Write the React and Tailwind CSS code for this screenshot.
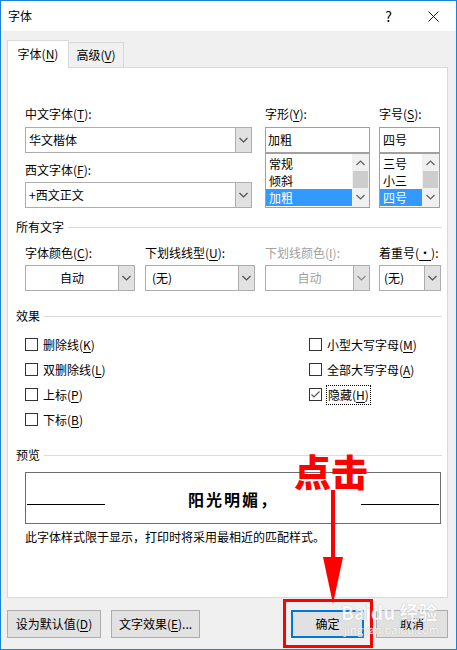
import React from "react";

// small chevron used in combo boxes and scrollbars
const Chevron = ({ up = false, color = "#606060" }) => (
  <svg width="9" height="6" viewBox="0 0 9 6">
    <polyline
      points={up ? "0.5,5 4.5,1 8.5,5" : "0.5,1 4.5,5 8.5,1"}
      fill="none"
      stroke={color}
      strokeWidth="1.2"
    />
  </svg>
);

// label text with an underlined access key
const Key = ({ children }) => <span className="underline underline-offset-2">{children}</span>;

function Combo({ className, text, center = false, disabled = false }) {
  return (
    <div className={`flex h-[26px] border border-[#adadad] bg-white ${className || ""}`}>
      <div
        className={`flex flex-1 items-center px-[3px] ${center ? "justify-center" : ""} ${
          disabled ? "text-[#a0a0a0]" : "text-black"
        }`}
      >
        {text}
      </div>
      <div className="flex w-[16px] items-center justify-center border-l border-[#adadad] bg-[#e1e1e1]">
        <Chevron color={disabled ? "#8a8a8a" : "#505050"} />
      </div>
    </div>
  );
}

function ListBox({ items }) {
  return (
    <div className="flex h-[55px] border border-[#a0a0a0] bg-white">
      <div className="flex-1 pt-[1px]">
        {items.map((item, i) => (
          <div
            key={item}
            className={`flex h-[17px] items-center pl-[3px] ${
              i === items.length - 1 ? "bg-[#3399ff] text-white" : "text-black"
            }`}
          >
            {item}
          </div>
        ))}
      </div>
      <div className="flex w-[17px] flex-col bg-[#f0f0f0]">
        <div className="flex h-[17px] items-center justify-center">
          <Chevron up color="#606060" />
        </div>
        <div className="mx-[1px] h-[17px] bg-[#cdcdcd]" />
        <div className="flex h-[17px] items-center justify-center">
          <Chevron color="#606060" />
        </div>
      </div>
    </div>
  );
}

function Check({ label, checked = false, focus = false }) {
  return (
    <div className="flex h-[25px] items-center">
      <div className="flex h-[13px] w-[13px] items-center justify-center border border-[#333333] bg-white">
        {checked && (
          <svg width="11" height="11" viewBox="0 0 11 11">
            <polyline points="1.5,5.5 4,8 9.5,2.5" fill="none" stroke="#555555" strokeWidth="1.2" />
          </svg>
        )}
      </div>
      <div
        className={`ml-[4px] leading-[16px] ${
          focus ? "border border-dotted border-black px-[1px] py-[1px]" : "px-[1px]"
        }`}
      >
        {label}
      </div>
    </div>
  );
}

function SectionTitle({ children }) {
  return (
    <div className="flex h-[16px] items-center pl-[8px] pr-[5px]">
      <span>{children}</span>
      <div className="ml-[4px] h-px flex-1 bg-[#dcdcdc]" />
    </div>
  );
}

export default function App() {
  return (
    <div className="relative h-[650px] w-[457px] overflow-hidden border border-[#1883d7] bg-[#f0f0f0] font-['Noto_Sans_CJK_SC',sans-serif] text-[12px] leading-[16px] text-black">
      {/* title bar */}
      <div className="flex h-[30px] items-center bg-white">
        <span className="pl-[7px] text-[12px]">字体</span>
        <div className="ml-auto flex h-full">
          <div className="flex w-[45px] items-center justify-center text-[14px]">?</div>
          <div className="flex w-[45px] items-center justify-center">
            <svg width="11" height="11" viewBox="0 0 11 11">
              <path d="M0.5 0.5L10.5 10.5M10.5 0.5L0.5 10.5" stroke="#111" strokeWidth="1" />
            </svg>
          </div>
        </div>
      </div>

      <div className="px-[6px]">
        {/* tabs */}
        <div className="flex pt-[9px]">
          <div className="relative z-10 flex h-[28px] w-[62px] items-center justify-center border-l border-r border-t border-[#d9d9d9] bg-white pb-[1px]">
            字体(<Key>N</Key>)
          </div>
          <div className="mt-[2px] flex h-[25px] w-[55px] items-center justify-center border-r border-t border-[#d9d9d9] bg-[#f0f0f0]">
            高级(<Key>V</Key>)
          </div>
        </div>

        {/* tab panel */}
        <div className="-mt-px h-[531px] w-[441px] border border-[#d9d9d9] bg-white">
          <div className="flex pl-[17px] pt-[38px]">
            <div className="w-[227px]">
              <div>
                中文字体(<Key>T</Key>):
              </div>
              <Combo className="mt-[5px]" text="华文楷体" />
              <div className="mt-[9px]">
                西文字体(<Key>F</Key>):
              </div>
              <Combo className="mt-[4px]" text="+西文正文" />
            </div>
            <div className="ml-[13px] w-[105px]">
              <div>
                字形(<Key>Y</Key>):
              </div>
              <div className="mt-[5px] flex h-[26px] items-center border border-[#a0a0a0] bg-white pl-[2px]">加粗</div>
              <ListBox items={["常规", "倾斜", "加粗"]} />
            </div>
            <div className="ml-[9px] w-[61px]">
              <div>
                字号(<Key>S</Key>):
              </div>
              <div className="mt-[5px] flex h-[26px] items-center border border-[#a0a0a0] bg-white pl-[3px]">四号</div>
              <ListBox items={["三号", "小三", "四号"]} />
            </div>
          </div>

          <div className="mt-[11px]">
            <SectionTitle>所有文字</SectionTitle>
          </div>
          <div className="mt-[10px] flex pl-[17px]">
            <div className="w-[110px]">
              <div>
                字体颜色(<Key>C</Key>):
              </div>
              <Combo className="mt-[4px]" text="自动" center />
            </div>
            <div className="ml-[10px] w-[110px]">
              <div>
                下划线线型(<Key>U</Key>):
              </div>
              <Combo className="mt-[4px]" text={<span className="pl-[3px]">(无)</span>} />
            </div>
            <div className="ml-[10px] w-[105px]">
              <div className="text-[#a0a0a0]">
                下划线颜色(<Key>I</Key>):
              </div>
              <Combo className="mt-[4px]" text="自动" center disabled />
            </div>
            <div className="ml-[9px] w-[62px]">
              <div>
                着重号(<Key>·</Key>):
              </div>
              <Combo className="mt-[4px]" text={<span className="pl-[1px]">(无)</span>} />
            </div>
          </div>

          <div className="mt-[17px]">
            <SectionTitle>效果</SectionTitle>
          </div>
          <div className="mt-[8px] flex pl-[17px]">
            <div className="w-[284px]">
              <Check label={<>删除线(<Key>K</Key>)</>} />
              <Check label={<>双删除线(<Key>L</Key>)</>} />
              <Check label={<>上标(<Key>P</Key>)</>} />
              <Check label={<>下标(<Key>B</Key>)</>} />
            </div>
            <div>
              <Check label={<>小型大写字母(<Key>M</Key>)</>} />
              <Check label={<>全部大写字母(<Key>A</Key>)</>} />
              <Check label={<>隐藏(<Key>H</Key>)</>} checked focus />
            </div>
          </div>

          <div className="mt-[15px]">
            <SectionTitle>预览</SectionTitle>
          </div>
          <div className="ml-[17px] mt-[9px] flex h-[52px] w-[416px] items-end border border-[#6d6d6d] bg-white px-[1px]">
            <div className="mb-[18px] h-px w-[78px] bg-black" />
            <div className="flex-1 self-center pt-[1px] text-center text-[16px] font-bold tracking-[2px]">
              阳光明媚，
            </div>
            <div className="mb-[18px] h-px w-[78px] bg-black" />
          </div>
          <div className="mt-[5px] pl-[17px]">此字体样式限于显示，打印时将采用最相近的匹配样式。</div>
        </div>

        {/* bottom buttons */}
        <div className="mt-[12px] flex">
          <button className="flex h-[28px] w-[94px] items-center justify-center border border-[#adadad] bg-[#e1e1e1]">
            设为默认值(<Key>D</Key>)
          </button>
          <button className="ml-[10px] flex h-[28px] w-[89px] items-center justify-center border border-[#adadad] bg-[#e1e1e1]">
            文字效果(<Key>E</Key>)...
          </button>
          <button className="ml-[91px] flex h-[28px] w-[73px] items-center justify-center border-2 border-[#0078d7] bg-[#e1e1e1]">
            确定
          </button>
          <button className="ml-[12px] flex h-[28px] w-[72px] items-center justify-center border border-[#adadad] bg-[#e1e1e1]">
            取消
          </button>
        </div>
      </div>

      {/* annotation overlay: "点击" with arrow and highlight box */}
      <div className="absolute left-[293px] top-[452px] text-[37px] font-black leading-none text-[#ff0000]">点击</div>
      <svg className="absolute left-[317px] top-[487px]" width="30" height="120" viewBox="0 0 30 120">
        <rect x="13" y="2" width="4" height="72" fill="#ff0000" />
        <polygon points="5,69 25,69 15,116" fill="#ff0000" />
      </svg>
      <div className="absolute left-[282px] top-[598px] h-[49px] w-[90px] border-[3px] border-[#ff0000]" />

      {/* watermark */}
      <div className="pointer-events-none absolute left-[340px] top-[600px] text-white opacity-80 [text-shadow:0_0_1px_#9a9a9a]">
        <div className="text-[19px] font-bold leading-[22px]">Baidu 经验</div>
        <div className="pl-[3px] text-[11px] leading-[12px]">jingyan.baidu.com</div>
      </div>
    </div>
  );
}
